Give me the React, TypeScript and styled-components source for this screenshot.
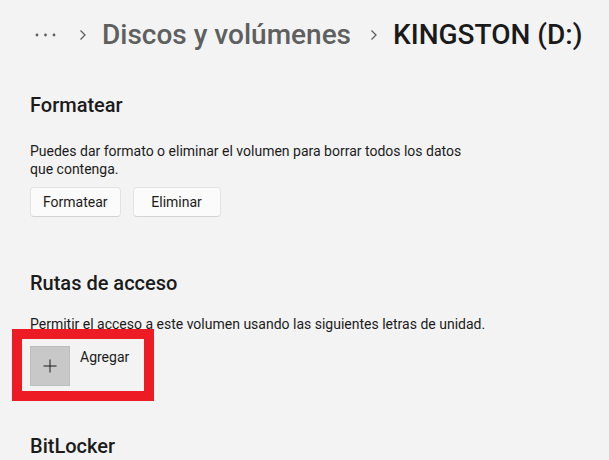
import styled, { createGlobalStyle } from "styled-components";

const GlobalStyle = createGlobalStyle`
  html, body {
    margin: 0;
    padding: 0;
    background: #f3f3f3;
  }
  body {
    font-family: "Segoe UI", Roboto, "Noto Sans", sans-serif;
    color: #1b1b1b;
  }
`;

const Page = styled.div`
  width: 609px;
  height: 460px;
  overflow: hidden;
  padding: 0 0 0 30px;
  box-sizing: border-box;
`;

const Breadcrumb = styled.div`
  display: flex;
  align-items: center;
  height: 40px;
  margin-top: 15px;
  padding-left: 5px;
`;

const Crumb = styled.span<{ $current?: boolean }>`
  font-size: 28px;
  font-weight: 500;
  line-height: 40px;
  color: ${(p) => (p.$current ? "#1a1a1a" : "#5f5f5f")};
  white-space: nowrap;
`;

const Chevron = styled.svg<{ $gap: number }>`
  flex: none;
  margin: 0 15px 0 ${(p) => p.$gap}px;
`;

const Section = styled.section<{ $top: number }>`
  margin-top: ${(p) => p.$top}px;
`;

const Heading = styled.h2`
  margin: 0;
  font-size: 20px;
  font-weight: 500;
  line-height: 28px;
  color: #1b1b1b;
`;

const Text = styled.p<{ $top: number; $width: number }>`
  margin: ${(p) => p.$top}px 0 0;
  font-size: 14px;
  line-height: 18px;
  color: #1b1b1b;
  width: ${(p) => p.$width}px;
`;

const ButtonRow = styled.div`
  display: flex;
  gap: 12px;
  margin-top: 9px;
`;

const Button = styled.button`
  height: 30px;
  padding: 0 12px;
  min-width: 88px;
  border: 1px solid #e3e3e3;
  border-bottom-color: #d3d3d3;
  border-radius: 4px;
  background: #fbfbfb;
  font-family: inherit;
  font-size: 14px;
  color: #1b1b1b;
`;

const Highlight = styled.div`
  margin: -4px 0 0 -18px;
  border: 10px solid #ed1c24;
  display: flex;
  align-items: flex-start;
  padding: 7px 0 0 8px;
  width: 114px;
  height: 45px;
`;

const AddTile = styled.div`
  width: 38px;
  height: 38px;
  flex: none;
  background: #c8c8c8;
  border: 1px solid #bebebe;
  display: flex;
  align-items: center;
  justify-content: center;
`;

const AddLabel = styled.span`
  margin-left: 10px;
  font-size: 14px;
  line-height: 18px;
  margin-top: 2px;
  color: #1b1b1b;
`;

function Dots() {
  return (
    <svg width="22" height="6" viewBox="0 0 22 6">
      <circle cx="2" cy="3" r="1.4" fill="#5f5f5f" />
      <circle cx="10.5" cy="3" r="1.4" fill="#5f5f5f" />
      <circle cx="19" cy="3" r="1.4" fill="#5f5f5f" />
    </svg>
  );
}

function ChevronRight({ gap }: { gap: number }) {
  return (
    <Chevron $gap={gap} width="8" height="12" viewBox="0 0 8 12">
      <path d="M1.5 1.5 L6 6 L1.5 10.5" fill="none" stroke="#5f5f5f" strokeWidth="1.3" />
    </Chevron>
  );
}

export default function App() {
  return (
    <>
      <GlobalStyle />
      <Page>
        <Breadcrumb>
          <Dots />
          <ChevronRight gap={22} />
          <Crumb>Discos y volúmenes</Crumb>
          <ChevronRight gap={19} />
          <Crumb $current>KINGSTON (D:)</Crumb>
        </Breadcrumb>

        <Section $top={36}>
          <Heading>Formatear</Heading>
          <Text $top={23} $width={445}>
            Puedes dar formato o eliminar el volumen para borrar todos los datos que contenga.
          </Text>
          <ButtonRow>
            <Button>Formatear</Button>
            <Button>Eliminar</Button>
          </ButtonRow>
        </Section>

        <Section $top={52}>
          <Heading>Rutas de acceso</Heading>
          <Text $top={18} $width={480}>
            Permitir el acceso a este volumen usando las siguientes letras de unidad.
          </Text>
          <Highlight>
            <AddTile>
              <svg width="14" height="14" viewBox="0 0 14 14">
                <path d="M7 0.5 V13.5 M0.5 7 H13.5" stroke="#1b1b1b" strokeWidth="1" />
              </svg>
            </AddTile>
            <AddLabel>Agregar</AddLabel>
          </Highlight>
        </Section>

        <Section $top={31}>
          <Heading>BitLocker</Heading>
        </Section>
      </Page>
    </>
  );
}
